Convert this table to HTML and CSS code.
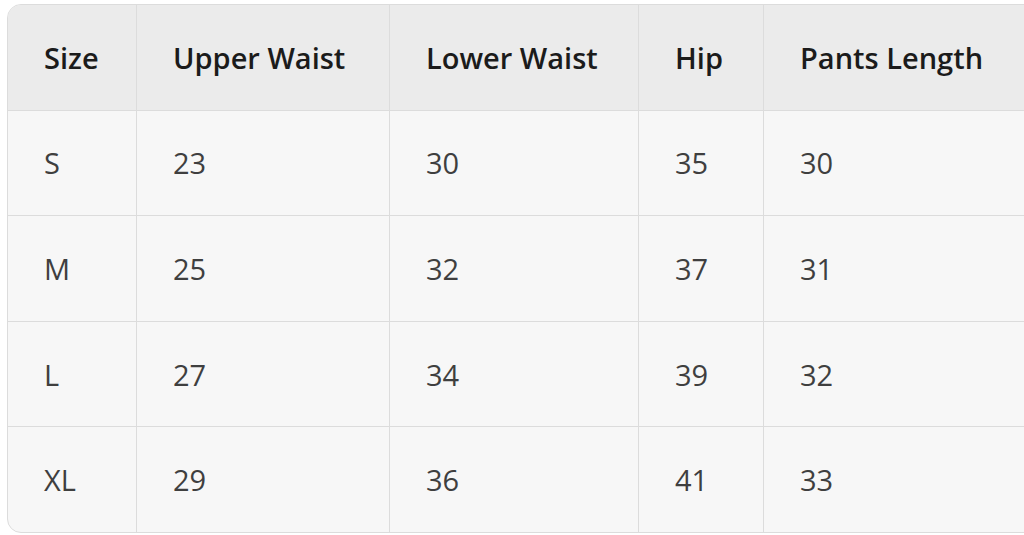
FILE: index.html
```html
<!DOCTYPE html>
<html>
<head>
<meta charset="utf-8">
<link rel="stylesheet" href="styles.css">
</head>
<body>
<div class="wrap">
<table class="size-table">
  <colgroup>
    <col class="c1"><col class="c2"><col class="c3"><col class="c4"><col class="c5">
  </colgroup>
  <thead>
    <tr><th>Size</th><th>Upper Waist</th><th>Lower Waist</th><th>Hip</th><th>Pants Length</th></tr>
  </thead>
  <tbody>
    <tr><td>S</td><td>23</td><td>30</td><td>35</td><td>30</td></tr>
    <tr><td>M</td><td>25</td><td>32</td><td>37</td><td>31</td></tr>
    <tr><td>L</td><td>27</td><td>34</td><td>39</td><td>32</td></tr>
    <tr><td>XL</td><td>29</td><td>36</td><td>41</td><td>33</td></tr>
  </tbody>
</table>
</div>
</body>
</html>
```

FILE: styles.css
```css
html, body {
  margin: 0;
  padding: 0;
  background: #ffffff;
}
.wrap {
  padding: 4px 0 0 7px;
}
.size-table {
  width: 1017px;
  table-layout: fixed;
  border-collapse: separate;
  border-spacing: 0;
  border: 1px solid #dcdcdc;
  border-radius: 14px 0 0 14px;
  overflow: hidden;
  font-family: "Open Sans", "Noto Sans", sans-serif;
  font-size: 29px;
  background: #f7f7f7;
}
.c1 { width: 129px; }
.c2 { width: 253px; }
.c3 { width: 249px; }
.c4 { width: 125px; }
.c5 { width: 260px; }
.size-table th,
.size-table td {
  text-align: left;
  padding: 0 0 0 36px;
  height: 104.6px;
  border-right: 1px solid #dcdcdc;
  border-bottom: 1px solid #dcdcdc;
  vertical-align: middle;
  white-space: nowrap;
}
.size-table th:last-child,
.size-table td:last-child {
  border-right: none;
}
.size-table tbody tr:last-child td {
  border-bottom: none;
}
.size-table th {
  background: #ebebeb;
  color: #1b1b1b;
  font-weight: 600;
}
.size-table td {
  color: #3f3f3f;
  font-weight: 400;
}
```
